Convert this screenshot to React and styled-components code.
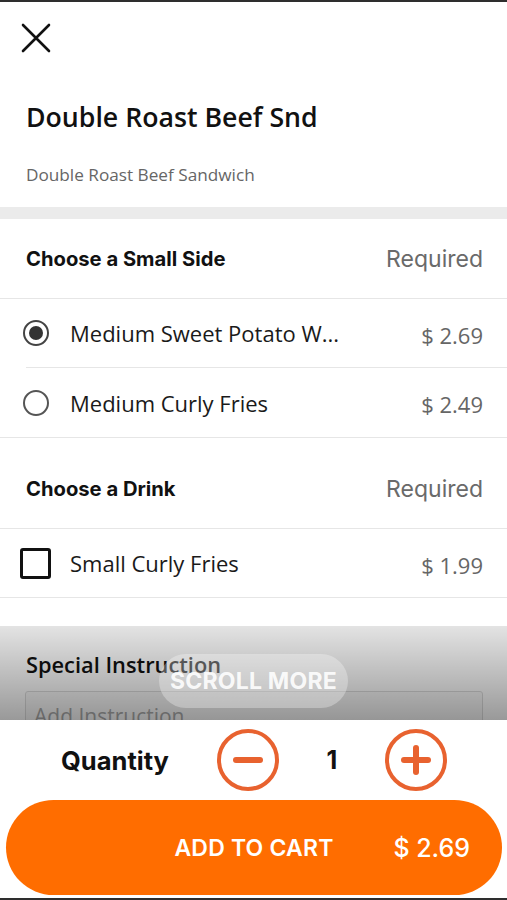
import React from "react";
import styled, { createGlobalStyle } from "styled-components";

const Global = createGlobalStyle`
  html, body { margin: 0; padding: 0; background: #fff; }
  body { font-family: "Open Sans", "Noto Sans", sans-serif; color: #111; }
  * { box-sizing: border-box; }
`;

const Screen = styled.div`
  width: 507px;
  height: 900px;
  display: flex;
  flex-direction: column;
  border-top: 2px solid #2e2e2e;
  border-bottom: 2px solid #2e2e2e;
  overflow: hidden;
  background: #fff;
`;

const Scroller = styled.div`
  position: relative;
  flex: 0 0 718px;
  overflow: hidden;
`;

const Header = styled.div`
  display: flex;
  flex-direction: column;
  padding: 20px 26px 0;
  height: 205px;
`;

const CloseButton = styled.button`
  width: 32px;
  height: 32px;
  margin-left: -6px;
  padding: 0;
  border: none;
  background: none;
  display: flex;
  align-items: center;
  justify-content: center;
`;

const Title = styled.h1`
  margin: 46px 0 0;
  font-family: "Open Sans", sans-serif;
  font-weight: 600;
  font-size: 26.7px;
  line-height: 34px;
  color: #111;
`;

const Subtitle = styled.p`
  margin: 30px 0 0;
  font-family: "Open Sans", sans-serif;
  font-size: 17.2px;
  line-height: 22px;
  color: #666;
`;

const Band = styled.div`
  height: ${(p) => p.$h || 12}px;
  background: ${(p) => p.$color || "#ebebeb"};
`;

const GroupHeader = styled.div`
  height: 80px;
  display: flex;
  align-items: center;
  justify-content: space-between;
  padding: 0 24px 0 26px;
  border-bottom: 1px solid #e6e6e6;
`;

const GroupTitle = styled.span`
  font-family: Inter, "Liberation Sans", sans-serif;
  font-weight: 700;
  font-size: 20.2px;
  color: #111;
`;

const Required = styled.span`
  font-family: Inter, "Liberation Sans", sans-serif;
  font-size: 23px;
  color: #6a6a6a;
`;

const OptionRow = styled.div`
  height: ${(p) => (p.$tall ? "70px" : "69px")};
  display: flex;
  align-items: center;
  padding: 0 24px 0 ${(p) => (p.$check ? "20px" : "23px")};
  position: relative;
  border-bottom: 1px solid ${(p) => (p.$inset ? "transparent" : "#e6e6e6")};
  &::after {
    content: "";
    display: ${(p) => (p.$inset ? "block" : "none")};
    position: absolute;
    left: 26px;
    right: 0;
    bottom: -1px;
    height: 1px;
    background: #e6e6e6;
  }
`;

const Radio = styled.span`
  width: 26px;
  height: 26px;
  border-radius: 50%;
  border: ${(p) => (p.$on ? "2.5px solid #444" : "2px solid #555")};
  display: flex;
  align-items: center;
  justify-content: center;
  flex: none;
  &::before {
    content: "";
    width: 14px;
    height: 14px;
    border-radius: 50%;
    background: #333;
    display: ${(p) => (p.$on ? "block" : "none")};
  }
`;

const Checkbox = styled.span`
  width: 31px;
  height: 31px;
  border: 3px solid #111;
  border-radius: 3px;
  flex: none;
`;

const OptionLabel = styled.span`
  flex: 1;
  margin-left: ${(p) => (p.$check ? "19px" : "21px")};
  font-family: "Open Sans", sans-serif;
  font-size: 22px;
  color: #1a1a1a;
  white-space: nowrap;
  overflow: hidden;
`;

const Price = styled.span`
  font-family: "Open Sans", sans-serif;
  font-size: 22px;
  color: #666;
  margin-top: 3px;
`;

const InstructionSection = styled.div`
  padding: 52px 24px 0 26px;
  display: flex;
  flex-direction: column;
`;

const InstructionLabel = styled.span`
  font-family: "Open Sans", sans-serif;
  font-weight: 600;
  font-size: 21.8px;
  color: #111;
`;

const InstructionInput = styled.div`
  margin: 12px 0 0 -1px;
  height: 60px;
  border: 1px solid #ddd;
  border-radius: 3px;
  background: #fafafa;
  padding: 10px 8px;
  font-family: "Open Sans", sans-serif;
  font-size: 21px;
  color: #aaa;
`;

const ScrollOverlay = styled.div`
  position: absolute;
  left: 0;
  right: 0;
  bottom: 0;
  height: 94px;
  background: linear-gradient(rgba(0, 0, 0, 0.11), rgba(0, 0, 0, 0.4));
  display: flex;
  justify-content: center;
  padding-top: 28px;
`;

const ScrollPill = styled.div`
  height: 54px;
  width: 189px;
  border-radius: 27px;
  background: rgba(255, 255, 255, 0.3);
  display: flex;
  align-items: center;
  justify-content: center;
  font-family: Inter, "Liberation Sans", sans-serif;
  font-weight: 700;
  font-size: 23px;
  color: rgba(255, 255, 255, 0.9);
  letter-spacing: 0.2px;
`;

const Footer = styled.div`
  flex: 1;
  display: flex;
  flex-direction: column;
  padding: 9px 5px 0 6px;
  background: #fff;
`;

const QuantityRow = styled.div`
  height: 62px;
  display: flex;
  align-items: center;
  justify-content: center;
`;

const QuantityLabel = styled.span`
  font-family: Inter, "Liberation Sans", sans-serif;
  font-weight: 700;
  font-size: 25.5px;
  color: #111;
  margin-right: 48px;
`;

const StepButton = styled.button`
  width: 62px;
  height: 62px;
  padding: 0;
  border: none;
  background: none;
  display: flex;
`;

const Count = styled.span`
  width: 106px;
  text-align: center;
  font-family: Inter, "Liberation Sans", sans-serif;
  font-weight: 700;
  font-size: 25px;
  color: #111;
`;

const CartButton = styled.button`
  margin-top: 9px;
  height: 95px;
  width: 496px;
  border: none;
  border-radius: 48px;
  background: #ff6d00;
  color: #fff;
  display: grid;
  grid-template-columns: 1fr auto 1fr;
  align-items: center;
  padding: 0 32px 0 32px;
  font-family: Inter, "Liberation Sans", sans-serif;
`;

const CartLabel = styled.span`
  grid-column: 2;
  font-size: 23px;
  font-weight: 600;
  letter-spacing: 0.2px;
`;

const CartPrice = styled.span`
  grid-column: 3;
  justify-self: end;
  font-size: 25px;
  font-weight: 500;
`;

const CloseIcon = () => (
  <svg width="30" height="30" viewBox="0 0 30 30">
    <path d="M2 2 L28 28 M28 2 L2 28" stroke="#111" strokeWidth="2.6" strokeLinecap="round" />
  </svg>
);

const StepIcon = ({ plus }) => (
  <svg width="62" height="62" viewBox="0 0 62 62">
    <circle cx="31" cy="31" r="29" fill="none" stroke="#e8622f" strokeWidth="4" />
    <path d="M19 31 H43" stroke="#e8622f" strokeWidth="6" strokeLinecap="round" />
    {plus && <path d="M31 19 V43" stroke="#e8622f" strokeWidth="6" strokeLinecap="round" />}
  </svg>
);

export default function App() {
  return (
    <>
      <Global />
      <Screen>
        <Scroller>
          <Header>
            <CloseButton aria-label="Close">
              <CloseIcon />
            </CloseButton>
            <Title>Double Roast Beef Snd</Title>
            <Subtitle>Double Roast Beef Sandwich</Subtitle>
          </Header>
          <Band />
          <GroupHeader>
            <GroupTitle>Choose a Small Side</GroupTitle>
            <Required>Required</Required>
          </GroupHeader>
          <OptionRow $inset>
            <Radio $on />
            <OptionLabel>Medium Sweet Potato W...</OptionLabel>
            <Price>$ 2.69</Price>
          </OptionRow>
          <OptionRow $tall>
            <Radio />
            <OptionLabel>Medium Curly Fries</OptionLabel>
            <Price>$ 2.49</Price>
          </OptionRow>
          <Band $color="#fff" $h={11} />
          <GroupHeader>
            <GroupTitle>Choose a Drink</GroupTitle>
            <Required>Required</Required>
          </GroupHeader>
          <OptionRow $check>
            <Checkbox />
            <OptionLabel $check>Small Curly Fries</OptionLabel>
            <Price>$ 1.99</Price>
          </OptionRow>
          <InstructionSection>
            <InstructionLabel>Special Instruction</InstructionLabel>
            <InstructionInput>Add Instruction</InstructionInput>
          </InstructionSection>
          <ScrollOverlay>
            <ScrollPill>SCROLL MORE</ScrollPill>
          </ScrollOverlay>
        </Scroller>
        <Footer>
          <QuantityRow>
            <QuantityLabel>Quantity</QuantityLabel>
            <StepButton aria-label="Decrease">
              <StepIcon />
            </StepButton>
            <Count>1</Count>
            <StepButton aria-label="Increase">
              <StepIcon plus />
            </StepButton>
          </QuantityRow>
          <CartButton>
            <CartLabel>ADD TO CART</CartLabel>
            <CartPrice>$ 2.69</CartPrice>
          </CartButton>
        </Footer>
      </Screen>
    </>
  );
}
